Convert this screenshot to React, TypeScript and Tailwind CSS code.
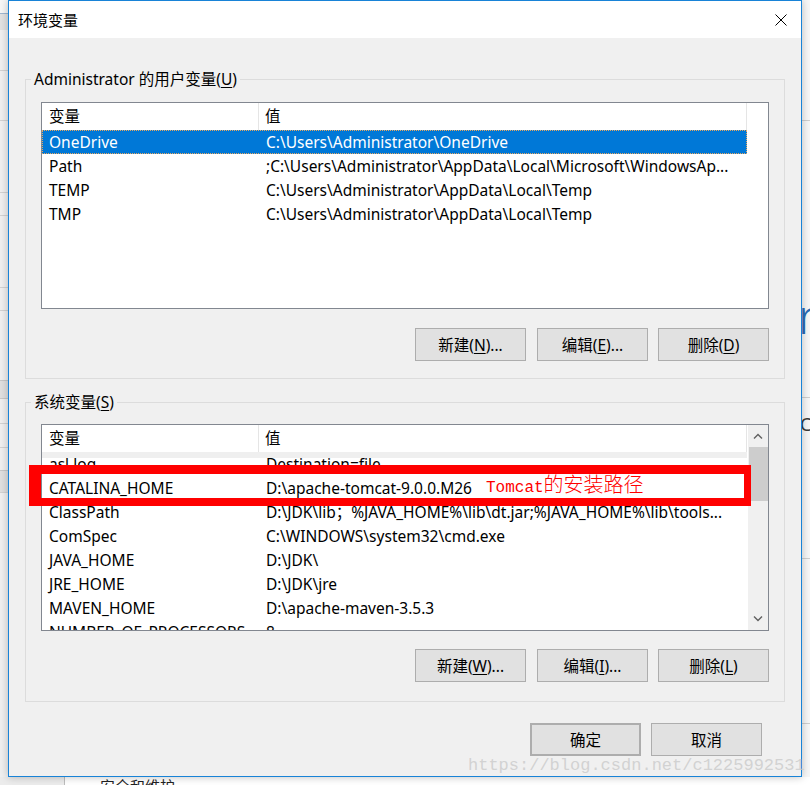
import type { ReactNode } from 'react';

const userVars = [
    { name: 'OneDrive', value: 'C:\\Users\\Administrator\\OneDrive', selected: true },
    { name: 'Path', value: ';C:\\Users\\Administrator\\AppData\\Local\\Microsoft\\WindowsAp...' },
    { name: 'TEMP', value: 'C:\\Users\\Administrator\\AppData\\Local\\Temp' },
    { name: 'TMP', value: 'C:\\Users\\Administrator\\AppData\\Local\\Temp' },
];

const sysVars = [
    { name: 'asl.log', value: 'Destination=file' },
    { name: 'CATALINA_HOME', value: 'D:\\apache-tomcat-9.0.0.M26' },
    { name: 'ClassPath', value: 'D:\\JDK\\lib；%JAVA_HOME%\\lib\\dt.jar;%JAVA_HOME%\\lib\\tools...' },
    { name: 'ComSpec', value: 'C:\\WINDOWS\\system32\\cmd.exe' },
    { name: 'JAVA_HOME', value: 'D:\\JDK\\' },
    { name: 'JRE_HOME', value: 'D:\\JDK\\jre' },
    { name: 'MAVEN_HOME', value: 'D:\\apache-maven-3.5.3' },
    { name: 'NUMBER_OF_PROCESSORS', value: '8' },
];

function Btn({ children, className = '' }: { children: ReactNode; className?: string }) {
    return (
        <button className={`w-[111px] h-[33px] bg-[#e1e1e1] border border-[#adadad] text-[15.5px] leading-[20px] text-black flex items-center justify-center ${className}`}>
            {children}
        </button>
    );
}

function Header() {
    return (
        <div className="flex h-[27px] w-[705px] shrink-0 text-[15.5px] leading-[20px]">
            <div className="w-[217px] pl-[7px] pt-[3px] border-r border-[#e5e5e5]">变量</div>
            <div className="flex-1 pl-[6px] pt-[3px] border-r border-[#e5e5e5]">值</div>
        </div>
    );
}

function Row({ name, value, selected, first }: { name: string; value: string; selected?: boolean; first?: boolean }) {
    return (
        <div
            className={`flex h-[24px] w-[705px] shrink-0 items-center text-[15.5px] leading-[20px] whitespace-nowrap overflow-hidden ${
                selected
                    ? 'bg-[#0078d7] text-white outline outline-1 outline-dotted outline-[#e8a860] -outline-offset-1'
                    : first
                        ? 'bg-[linear-gradient(#efefef_0_6px,#ffffff_6px)]'
                        : ''
            }`}
        >
            <div className="w-[217px] pl-[7px]">{name}</div>
            <div className="flex-1 pl-[7px]">{value}</div>
        </div>
    );
}

function Chevron({ up }: { up?: boolean }) {
    return (
        <svg width="10" height="6" viewBox="0 0 10 6">
            <path d={up ? 'M1 5.5 L5 1.5 L9 5.5' : 'M1 0.5 L5 4.5 L9 0.5'} fill="none" stroke="#606060" strokeWidth="1.4" />
        </svg>
    );
}

function GroupLabel({ children }: { children: ReactNode }) {
    return (
        <div className="-mt-[11px] ml-[5px] self-start bg-[#f0f0f0] px-[3px] text-[15.5px] leading-[20px]">{children}</div>
    );
}

export default function App() {
    return (
        <div className="relative w-[810px] h-[785px] overflow-hidden bg-[#f0f0f0] font-['Noto_Sans','Noto_Sans_CJK_SC',sans-serif] text-black">
            {/* windows behind the dialog */}
            <div className="absolute inset-0">
                <div className="absolute left-0 top-0 w-[8px] h-[13px] bg-[#f7f7f7]" />
                <div className="absolute left-0 top-[13px] w-[8px] h-[17px] bg-[#e2e2e2] border-t border-[#9fb6d0]" />
                {[70, 120, 192, 215, 287, 310, 423, 447, 492].map(y => (
                    <div key={y} className="absolute left-0 w-[8px] h-px bg-[#d2d2d2]" style={{ top: y }} />
                ))}
                <div className="absolute left-0 top-[380px] w-[8px] h-[19px] bg-[#e0e0e0] border-y border-[#c8c8c8]" />
                <div className="absolute left-0 top-[470px] w-[8px] h-[22px] bg-[#e0e0e0] border-t border-[#c8c8c8]" />
                <div className="absolute right-0 top-0 w-[8px] h-full bg-[#f7f7f7]" />
                <div className="absolute right-0 top-[120px] w-[8px] h-px bg-[#cfcfcf]" />
                <div className="absolute right-0 top-[397px] w-[8px] h-px bg-[#cfcfcf]" />
                <div className="absolute right-0 top-[558px] w-[8px] h-px bg-[#cfcfcf]" />
                <div className="absolute right-0 top-[723px] w-[8px] h-px bg-[#cfcfcf]" />
                <div className="absolute left-[798px] top-[286px] text-[48px] leading-[60px] text-[#2a6bb5] font-light">r</div>
                <div className="absolute left-[800px] top-[414px] text-[18px] leading-[20px] text-[#3a3a3a]">C</div>
                <div className="absolute left-0 bottom-0 w-full h-[8px] bg-white" />
                <div className="absolute left-0 bottom-0 w-[65px] h-[8px] bg-[#ececec] border-r border-[#bdbdbd]" />
                <div className="absolute left-[100px] top-[776px] text-[15px] leading-[20px] text-[#222]">安全和维护</div>
            </div>

            {/* dialog */}
            <div className="relative z-10 ml-[8px] w-[794px] h-[777px] border border-[#1883d7] bg-[#f0f0f0] shadow-[0_0_8px_rgba(0,0,0,0.25)] flex flex-col">
                <div className="h-[37px] bg-white flex items-center justify-between pl-[9px] pr-[14px] shrink-0">
                    <span className="text-[15px] leading-[20px] pt-[1px]">环境变量</span>
                    <svg width="12" height="12" viewBox="0 0 12 12">
                        <path d="M0.5 0.5 L11.5 11.5 M11.5 0.5 L0.5 11.5" stroke="#000" strokeWidth="1" />
                    </svg>
                </div>

                <div className="flex flex-col px-[16px]">
                    {/* user variables */}
                    <div className="mt-[41px] h-[300px] border border-[#dcdcdc] flex flex-col">
                        <GroupLabel>
                            Administrator 的用户变量(<u className="underline-offset-2">U</u>)
                        </GroupLabel>
                        <div className="mx-[15px] mt-[13px] h-[207px] border border-[#828790] bg-white flex flex-col overflow-hidden">
                            <Header />
                            {userVars.map(v => (
                                <Row key={v.name} {...v} />
                            ))}
                        </div>
                        <div className="mt-[19px] mr-[15px] flex justify-end">
                            <Btn className="mr-[11px]">新建(<u className="underline-offset-2">N</u>)...</Btn>
                            <Btn className="mr-[10px]">编辑(<u className="underline-offset-2">E</u>)...</Btn>
                            <Btn>删除(<u className="underline-offset-2">D</u>)</Btn>
                        </div>
                    </div>

                    {/* system variables */}
                    <div className="mt-[23px] h-[300px] border border-[#dcdcdc] flex flex-col">
                        <GroupLabel>
                            系统变量(<u className="underline-offset-2">S</u>)
                        </GroupLabel>
                        <div className="mx-[15px] mt-[12px] h-[207px] border border-[#828790] bg-white flex overflow-hidden">
                            <div className="flex-1 flex flex-col overflow-hidden">
                                <Header />
                                {sysVars.map((v, i) => (
                                    <Row key={v.name} name={v.name} value={v.value} first={i === 0} />
                                ))}
                            </div>
                            <div className="w-[20px] bg-[#f0f0f0] flex flex-col items-center shrink-0">
                                <div className="h-[22px] flex items-center justify-center">
                                    <Chevron up />
                                </div>
                                <div className="w-[19px] h-[54px] bg-[#cdcdcd]" />
                                <div className="flex-1" />
                                <div className="h-[22px] flex items-center justify-center">
                                    <Chevron />
                                </div>
                            </div>
                        </div>
                        <div className="mt-[18px] mr-[15px] flex justify-end">
                            <Btn className="mr-[11px]">新建(<u className="underline-offset-2">W</u>)...</Btn>
                            <Btn className="mr-[10px]">编辑(<u className="underline-offset-2">I</u>)...</Btn>
                            <Btn>删除(<u className="underline-offset-2">L</u>)</Btn>
                        </div>
                    </div>

                    <div className="mt-[21px] mr-[23px] flex justify-end gap-[10px]">
                        <Btn className="border-2 border-[#0078d7]">确定</Btn>
                        <Btn>取消</Btn>
                    </div>
                </div>
            </div>

            {/* annotation */}
            <div className="absolute z-20 left-[29px] top-[465px] w-[722px] h-[41px] border-solid border-[#ff0000] border-t-[9px] border-b-[8px] border-l-[12px] border-r-[7px]" />
            <div className="absolute z-20 left-[486px] top-[471px] flex items-baseline whitespace-nowrap text-[#ff0000] leading-[26px]">
                <span className="font-['Liberation_Mono',monospace] text-[16px]">Tomcat</span>
                <span className="font-['Noto_Sans_CJK_SC',sans-serif] text-[20px] font-light">的安装路径</span>
            </div>

            {/* watermark */}
            <div className="absolute z-20 left-[468px] top-[754px] font-['Liberation_Mono',monospace] text-[17px] leading-[24px] text-[#cacaca]/80 whitespace-nowrap">
                https://blog.csdn.net/c1225992531
            </div>
        </div>
    );
}
